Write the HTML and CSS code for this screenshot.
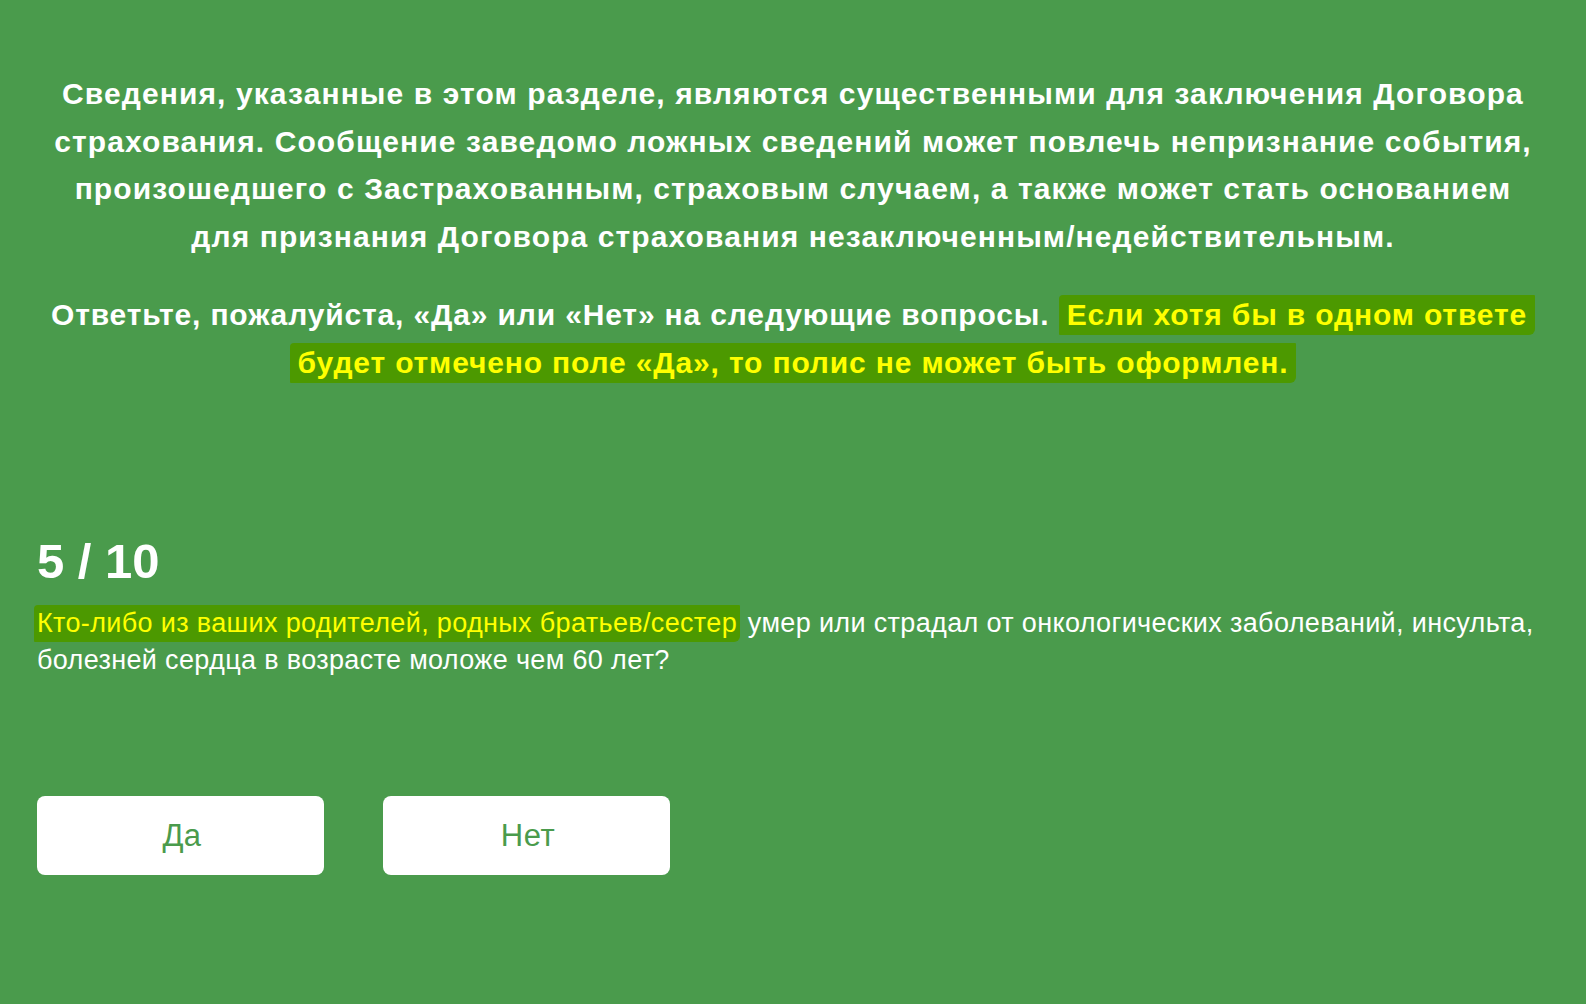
FILE: index.html
```html
<!DOCTYPE html>
<html lang="ru">
<head>
<meta charset="utf-8">
<link rel="stylesheet" href="styles.css">
</head>
<body>
<div class="page">
  <div class="intro">
    <p>Сведения, указанные в этом разделе, являются существенными для заключения Договора страхования. Сообщение заведомо ложных сведений может повлечь непризнание события, произошедшего с Застрахованным, страховым случаем, а также может стать основанием для признания Договора страхования незаключенным/недействительным.</p>
    <p class="notice">Ответьте, пожалуйста, «Да» или «Нет» на следующие вопросы. <span class="mark">Если хотя бы в одном ответе будет отмечено поле «Да», то полис не может быть оформлен.</span></p>
  </div>
  <div class="question">
    <div class="counter">5 / 10</div>
    <p class="qtext"><span class="mark">Кто-либо из ваших родителей, родных братьев/сестер</span> умер или страдал от онкологических заболеваний, инсульта, болезней сердца в возрасте моложе чем 60 лет?</p>
    <div class="buttons">
      <button class="btn">Да</button>
      <button class="btn">Нет</button>
    </div>
  </div>
</div>
</body>
</html>
```
FILE: styles.css
```css
html, body {
  margin: 0;
  padding: 0;
  background: #4a9b4c;
  height: 100%;
}
body {
  font-family: "Liberation Sans", Arial, sans-serif;
  color: #ffffff;
}
.page {
  padding: 70px 37px 0;
}
.intro {
  text-align: center;
  padding: 0 14px;
}
.intro p {
  margin: 0 0 31px;
  font-size: 30px;
  font-weight: bold;
  line-height: 47.5px;
  letter-spacing: 1.1px;
}
.intro .notice {
  margin: 0 -14px;
  letter-spacing: 0.85px;
}
.mark {
  background: #4c9900;
  color: #ffff00;
  padding: 3px 8px 4px;
  border-radius: 4px 1px 6px 1px;
  -webkit-box-decoration-break: clone;
  box-decoration-break: clone;
}
.question {
  margin-top: 148px;
}
.counter {
  font-size: 49px;
  font-weight: bold;
  line-height: 54px;
}
.qtext {
  margin: 17px 0 0;
  font-size: 27px;
  line-height: 37px;
  letter-spacing: 0.35px;
}
.qtext .mark {
  padding: 3px 3px 4px;
  margin-left: -3px;
}
.buttons {
  display: flex;
  gap: 59px;
  margin-top: 117px;
}
.btn {
  width: 287px;
  height: 79px;
  background: #ffffff;
  border: none;
  border-radius: 8px;
  color: #4a9b4c;
  font-family: "Liberation Sans", Arial, sans-serif;
  font-size: 31px;
  letter-spacing: 0.5px;
  padding: 0 0 0 3px;
}
```
